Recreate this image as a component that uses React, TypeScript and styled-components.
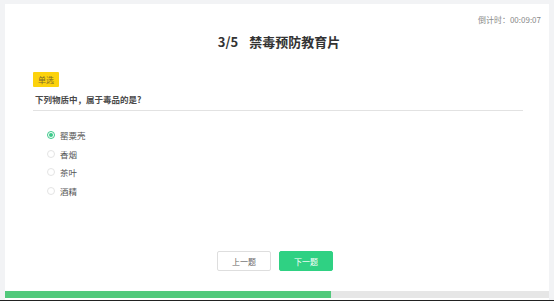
import React, { useState } from "react";
import styled, { createGlobalStyle } from "styled-components";

const GlobalStyle = createGlobalStyle`
  html, body {
    margin: 0;
    padding: 0;
    background: #f2f3f5;
    font-family: "Noto Sans CJK SC", "Noto Sans", sans-serif;
  }
`;

const Page = styled.div`
  width: 554px;
  height: 301px;
  box-sizing: border-box;
  padding: 4px 5px 0;
  border-bottom: 1px solid #222;
  display: flex;
  flex-direction: column;
`;

const Card = styled.div`
  flex: 1;
  background: #fff;
  display: flex;
  flex-direction: column;
  padding-bottom: 2px;
`;

const Timer = styled.div`
  align-self: flex-end;
  margin: 10px 8px 0 0;
  font-size: 8px;
  line-height: 11px;
  color: #8a8a8a;
`;

const Title = styled.h2`
  margin: 8px 0 0;
  text-align: center;
  font-size: 13px;
  line-height: 18px;
  font-weight: 700;
  color: #333;
  word-spacing: 8px;
  padding-left: 4px;
`;

const Body = styled.div`
  padding: 0 26px 0 28px;
  margin-top: 13px;
`;

const Tag = styled.span`
  display: inline-block;
  background: #fcd20d;
  color: #7a6a2a;
  font-size: 8px;
  line-height: 15px;
  padding: 0 5px;
  border-radius: 1px;
`;

const Question = styled.div`
  font-size: 8.5px;
  line-height: 12px;
  font-weight: 700;
  color: #4a4a4a;
  padding: 5px 0 5px 2px;
  border-bottom: 1px solid #e2e2e2;
`;

const Options = styled.ul`
  list-style: none;
  margin: 18px 0 0;
  padding: 0 0 0 14px;
  display: flex;
  flex-direction: column;
  gap: 6.5px;
`;

const Option = styled.li`
  display: flex;
  align-items: center;
  gap: 5px;
  height: 12px;
  font-size: 8.5px;
  color: #555;
  cursor: pointer;
`;

const Radio = styled.span<{ $checked: boolean }>`
  width: 8px;
  height: 8px;
  box-sizing: border-box;
  border-radius: 50%;
  border: 1px solid ${(p) => (p.$checked ? "#3cc98a" : "#e4e4e4")};
  display: flex;
  align-items: center;
  justify-content: center;

  &::after {
    content: "";
    width: 4px;
    height: 4px;
    border-radius: 50%;
    background: ${(p) => (p.$checked ? "#3cc98a" : "transparent")};
  }
`;

const Actions = styled.div`
  margin-top: auto;
  display: flex;
  justify-content: center;
  gap: 8px;
  padding: 0 4px 20px 0;
`;

const Button = styled.button<{ $primary?: boolean }>`
  width: 54px;
  height: 20px;
  padding: 0;
  font-family: inherit;
  font-size: 8px;
  border-radius: 2px;
  border: 1px solid ${(p) => (p.$primary ? "#2fd183" : "#dedede")};
  background: ${(p) => (p.$primary ? "#2fd183" : "#fff")};
  color: ${(p) => (p.$primary ? "#fff" : "#666")};
  cursor: pointer;
`;

const Progress = styled.div`
  height: 7px;
  background: #e6e6e6;
`;

const ProgressFill = styled.div`
  height: 100%;
  background: #52c97c;
`;

const options = ["罂粟壳", "香烟", "茶叶", "酒精"];

export default function App() {
  const [selected, setSelected] = useState(0);
  const current = 3;
  const total = 5;

  return (
    <>
      <GlobalStyle />
      <Page>
        <Card>
          <Timer>倒计时：00:09:07</Timer>
          <Title>
            {current}/{total} 禁毒预防教育片
          </Title>
          <Body>
            <Tag>单选</Tag>
            <Question>下列物质中，属于毒品的是?</Question>
            <Options>
              {options.map((o, i) => (
                <Option key={o} onClick={() => setSelected(i)}>
                  <Radio $checked={selected === i} />
                  {o}
                </Option>
              ))}
            </Options>
          </Body>
          <Actions>
            <Button>上一题</Button>
            <Button $primary>下一题</Button>
          </Actions>
          <Progress>
            <ProgressFill style={{ width: `${(current / total) * 100}%` }} />
          </Progress>
        </Card>
      </Page>
    </>
  );
}
